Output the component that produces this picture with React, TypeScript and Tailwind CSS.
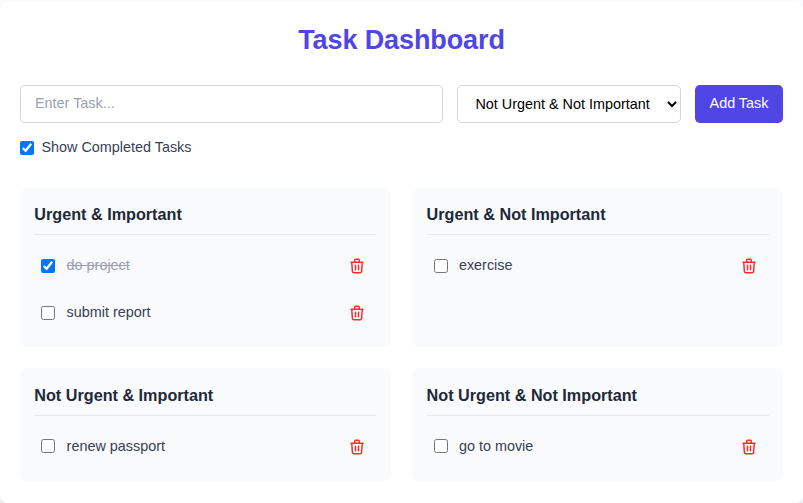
import { useState } from "react";

type Task = { text: string; done: boolean };
type Quadrant = { title: string; tasks: Task[] };

const initial: Quadrant[] = [
  {
    title: "Urgent & Important",
    tasks: [
      { text: "do project", done: true },
      { text: "submit report", done: false },
    ],
  },
  { title: "Urgent & Not Important", tasks: [{ text: "exercise", done: false }] },
  { title: "Not Urgent & Important", tasks: [{ text: "renew passport", done: false }] },
  { title: "Not Urgent & Not Important", tasks: [{ text: "go to movie", done: false }] },
];

function TrashIcon() {
  return (
    <svg className="size-[18px]" fill="none" viewBox="0 0 24 24" stroke="currentColor" strokeWidth={2} strokeLinecap="round" strokeLinejoin="round">
      <path d="M19 7l-.867 12.142A2 2 0 0116.138 21H7.862a2 2 0 01-1.995-1.858L5 7m5 4v6m4-6v6m1-10V4a1 1 0 00-1-1h-4a1 1 0 00-1 1v3M4 7h16" />
    </svg>
  );
}

function Checkbox({ checked, onChange }: { checked: boolean; onChange: () => void }) {
  return <input type="checkbox" checked={checked} onChange={onChange} className="size-[14px] shrink-0" />;
}

export default function App() {
  const [quadrants, setQuadrants] = useState(initial);
  const [showDone, setShowDone] = useState(true);

  const toggle = (q: number, t: number) =>
    setQuadrants(
      quadrants.map((quad, i) =>
        i === q ? { ...quad, tasks: quad.tasks.map((k, j) => (j === t ? { ...k, done: !k.done } : k)) } : quad
      )
    );

  return (
    <div className="h-[503px] overflow-hidden bg-gray-50 pt-[2px] font-['Liberation_Sans',Arial,sans-serif] text-[14.4px] leading-[21.6px] text-gray-800">
      <main className="h-[501px] rounded-[7px] bg-white px-5 pt-[22px] shadow-md">
        <h1 className="text-center text-[27px] leading-8 font-bold tracking-[-0.1px] text-[#4f46e5]">Task Dashboard</h1>

        <div className="mt-[29px] flex h-[38px] gap-[14px]">
          <input
            placeholder="Enter Task..."
            className="min-w-0 flex-1 rounded-[5px] border border-gray-300 px-[14px] pb-0 placeholder:text-gray-400"
          />
          <select
            defaultValue="nn"
            className="w-[224px] rounded-[5px] border border-gray-300 bg-white pl-[13.4px] text-black"
          >
            <option value="nn">Not Urgent &amp; Not Important</option>
          </select>
          <button className="w-[88px] rounded-[5px] bg-[#4f46e5] pb-px text-white">Add Task</button>
        </div>

        <label className="mt-[14px] flex h-[22px] items-center gap-[7.4px]">
          <Checkbox checked={showDone} onChange={() => setShowDone(!showDone)} />
          <span className="text-gray-700">Show Completed Tasks</span>
        </label>

        <div className="mt-[28.8px] grid grid-cols-2 gap-x-[21.6px] gap-y-[21px]">
          {quadrants.map((quad, q) => (
            <section key={quad.title} className="rounded-[7px] bg-gray-50 px-[14.3px] pt-[14.3px] pb-[14px]">
              <h2 className="h-[33px] border-b border-gray-200 text-[16.2px] leading-[25px] font-bold">{quad.title}</h2>
              <ul className="pt-[10.3px]">
                {quad.tasks.map((task, t) =>
                  task.done && !showDone ? null : (
                    <li key={task.text} className="flex h-[41px] items-center px-[7px] not-last:mb-[6px]">
                      <Checkbox checked={task.done} onChange={() => toggle(q, t)} />
                      <span className={task.done ? "ml-[11.3px] flex-1 text-gray-400 line-through" : "ml-[11.3px] flex-1 text-gray-700"}>
                        {task.text}
                      </span>
                      <button aria-label="Delete" className="mt-[0.5px] mr-[3.6px] text-[#fd2c2f]">
                        <TrashIcon />
                      </button>
                    </li>
                  )
                )}
              </ul>
            </section>
          ))}
        </div>
      </main>
    </div>
  );
}
